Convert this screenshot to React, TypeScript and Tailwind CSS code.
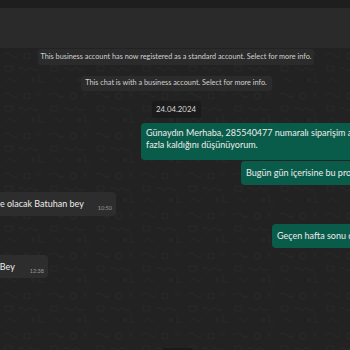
import React from "react";

const font = { fontFamily: 'Lato, "Noto Sans", sans-serif' };

function Doodles() {
  return (
    <svg className="absolute inset-0 w-full h-full pointer-events-none" xmlns="http://www.w3.org/2000/svg">
      <defs>
        <pattern id="dd" width="46" height="40" patternUnits="userSpaceOnUse">
          <g fill="none" stroke="#ffffff" strokeOpacity="0.028" strokeWidth="1">
            <path d="M3 7 q4 -4 8 0 t8 0" />
            <circle cx="27" cy="8" r="3" />
            <path d="M36 3 l6 6 m0 -6 l-6 6" />
            <rect x="5" y="18" width="7" height="5" rx="1" />
            <path d="M18 21 c3 -5 7 5 10 0 s7 5 10 0" />
            <path d="M6 34 l4 -4 l4 4 l4 -4" />
            <circle cx="33" cy="32" r="1.5" />
            <path d="M39 26 v8 h5" />
          </g>
        </pattern>
      </defs>
      <rect width="100%" height="100%" fill="url(#dd)" />
    </svg>
  );
}

export default function App() {
  return (
    <div className="w-[350px] h-[350px] overflow-hidden bg-[#222222] flex flex-col" style={font}>
      <div className="h-[8px] bg-[#1e1e1e] flex-none" />
      <div className="h-[40px] bg-[#2a2a2a] flex-none" />
      <div className="relative flex-1 flex flex-col">
        <Doodles />
        <div className="relative flex flex-col">
          <div className="flex justify-center mt-[1px] pl-[2px]">
            <div className="h-[16px] w-[276px] flex items-center justify-center rounded-[3px] bg-[#2b2b2b] text-[7.3px] text-[#d0d0d0] whitespace-nowrap">
              This business account has now registered as a standard account. Select for more info.
            </div>
          </div>
          <div className="flex justify-center mt-[11px] pl-[2px]">
            <div className="h-[15px] w-[191px] flex items-center justify-center rounded-[3px] bg-[#2b2b2b] text-[7.3px] text-[#d0d0d0] whitespace-nowrap">
              This chat is with a business account. Select for more info.
            </div>
          </div>
          <div className="flex justify-center mt-[10px] pl-[2px]">
            <div className="h-[17px] w-[49px] flex items-center justify-center rounded-[3px] bg-[#1b1b1b] text-[7.8px] text-[#d6d6d6]">
              24.04.2024
            </div>
          </div>
          <div className="flex pl-[141px] mt-[5px]">
            <div className="flex-none rounded-[4px] bg-[#0a5c4a] pl-[5px] pr-[20px] pt-[4px] pb-[9px] text-[9px] leading-[12px] text-[#ececec] whitespace-nowrap">
              Günaydın Merhaba, 285540477 numaralı siparişim askıda çok
              <br />
              fazla kaldığını düşünüyorum.
            </div>
          </div>
          <div className="flex pl-[241px] mt-[1px]">
            <div className="flex-none h-[24px] flex items-center rounded-[4px] bg-[#0a5c4a] pl-[5px] pr-[20px] text-[9px] text-[#ececec] whitespace-nowrap">
              Bugün gün içerisine bu problemi çözebilir misiniz?
            </div>
          </div>
          <div className="flex w-[116px] justify-end mt-[7px]">
            <div className="flex-none h-[24px] flex items-center rounded-[4px] bg-[#2d2d2d] pl-[8px] pr-[4px] whitespace-nowrap">
              <span className="text-[9px] text-[#ececec]">Kargoya teslim edilmiş olacak, bugün elinizde olacak Batuhan bey</span>
              <span className="ml-[14px] mt-[9px] text-[5.5px] text-[#9a9a9a]">10:50</span>
            </div>
          </div>
          <div className="flex pl-[272px] mt-[8px]">
            <div className="flex-none h-[24px] flex items-center rounded-[4px] bg-[#0a5c4a] pl-[5px] pr-[20px] text-[9px] text-[#ececec] whitespace-nowrap">
              Geçen hafta sonu da aynı şeyi söylemiştiniz.
            </div>
          </div>
          <div className="flex w-[48px] justify-end mt-[7px]">
            <div className="flex-none h-[23px] flex items-center rounded-[4px] bg-[#2d2d2d] pl-[8px] pr-[4px] whitespace-nowrap">
              <span className="text-[9px] text-[#ececec]">Teşekkürler Batuhan Bey</span>
              <span className="ml-[15px] mt-[9px] text-[5.5px] text-[#9a9a9a]">12:38</span>
            </div>
          </div>
        </div>
        <div className="absolute left-[163px] bottom-0 w-[29px] h-[2px] bg-[#1a1a1a]" />
      </div>
    </div>
  );
}
